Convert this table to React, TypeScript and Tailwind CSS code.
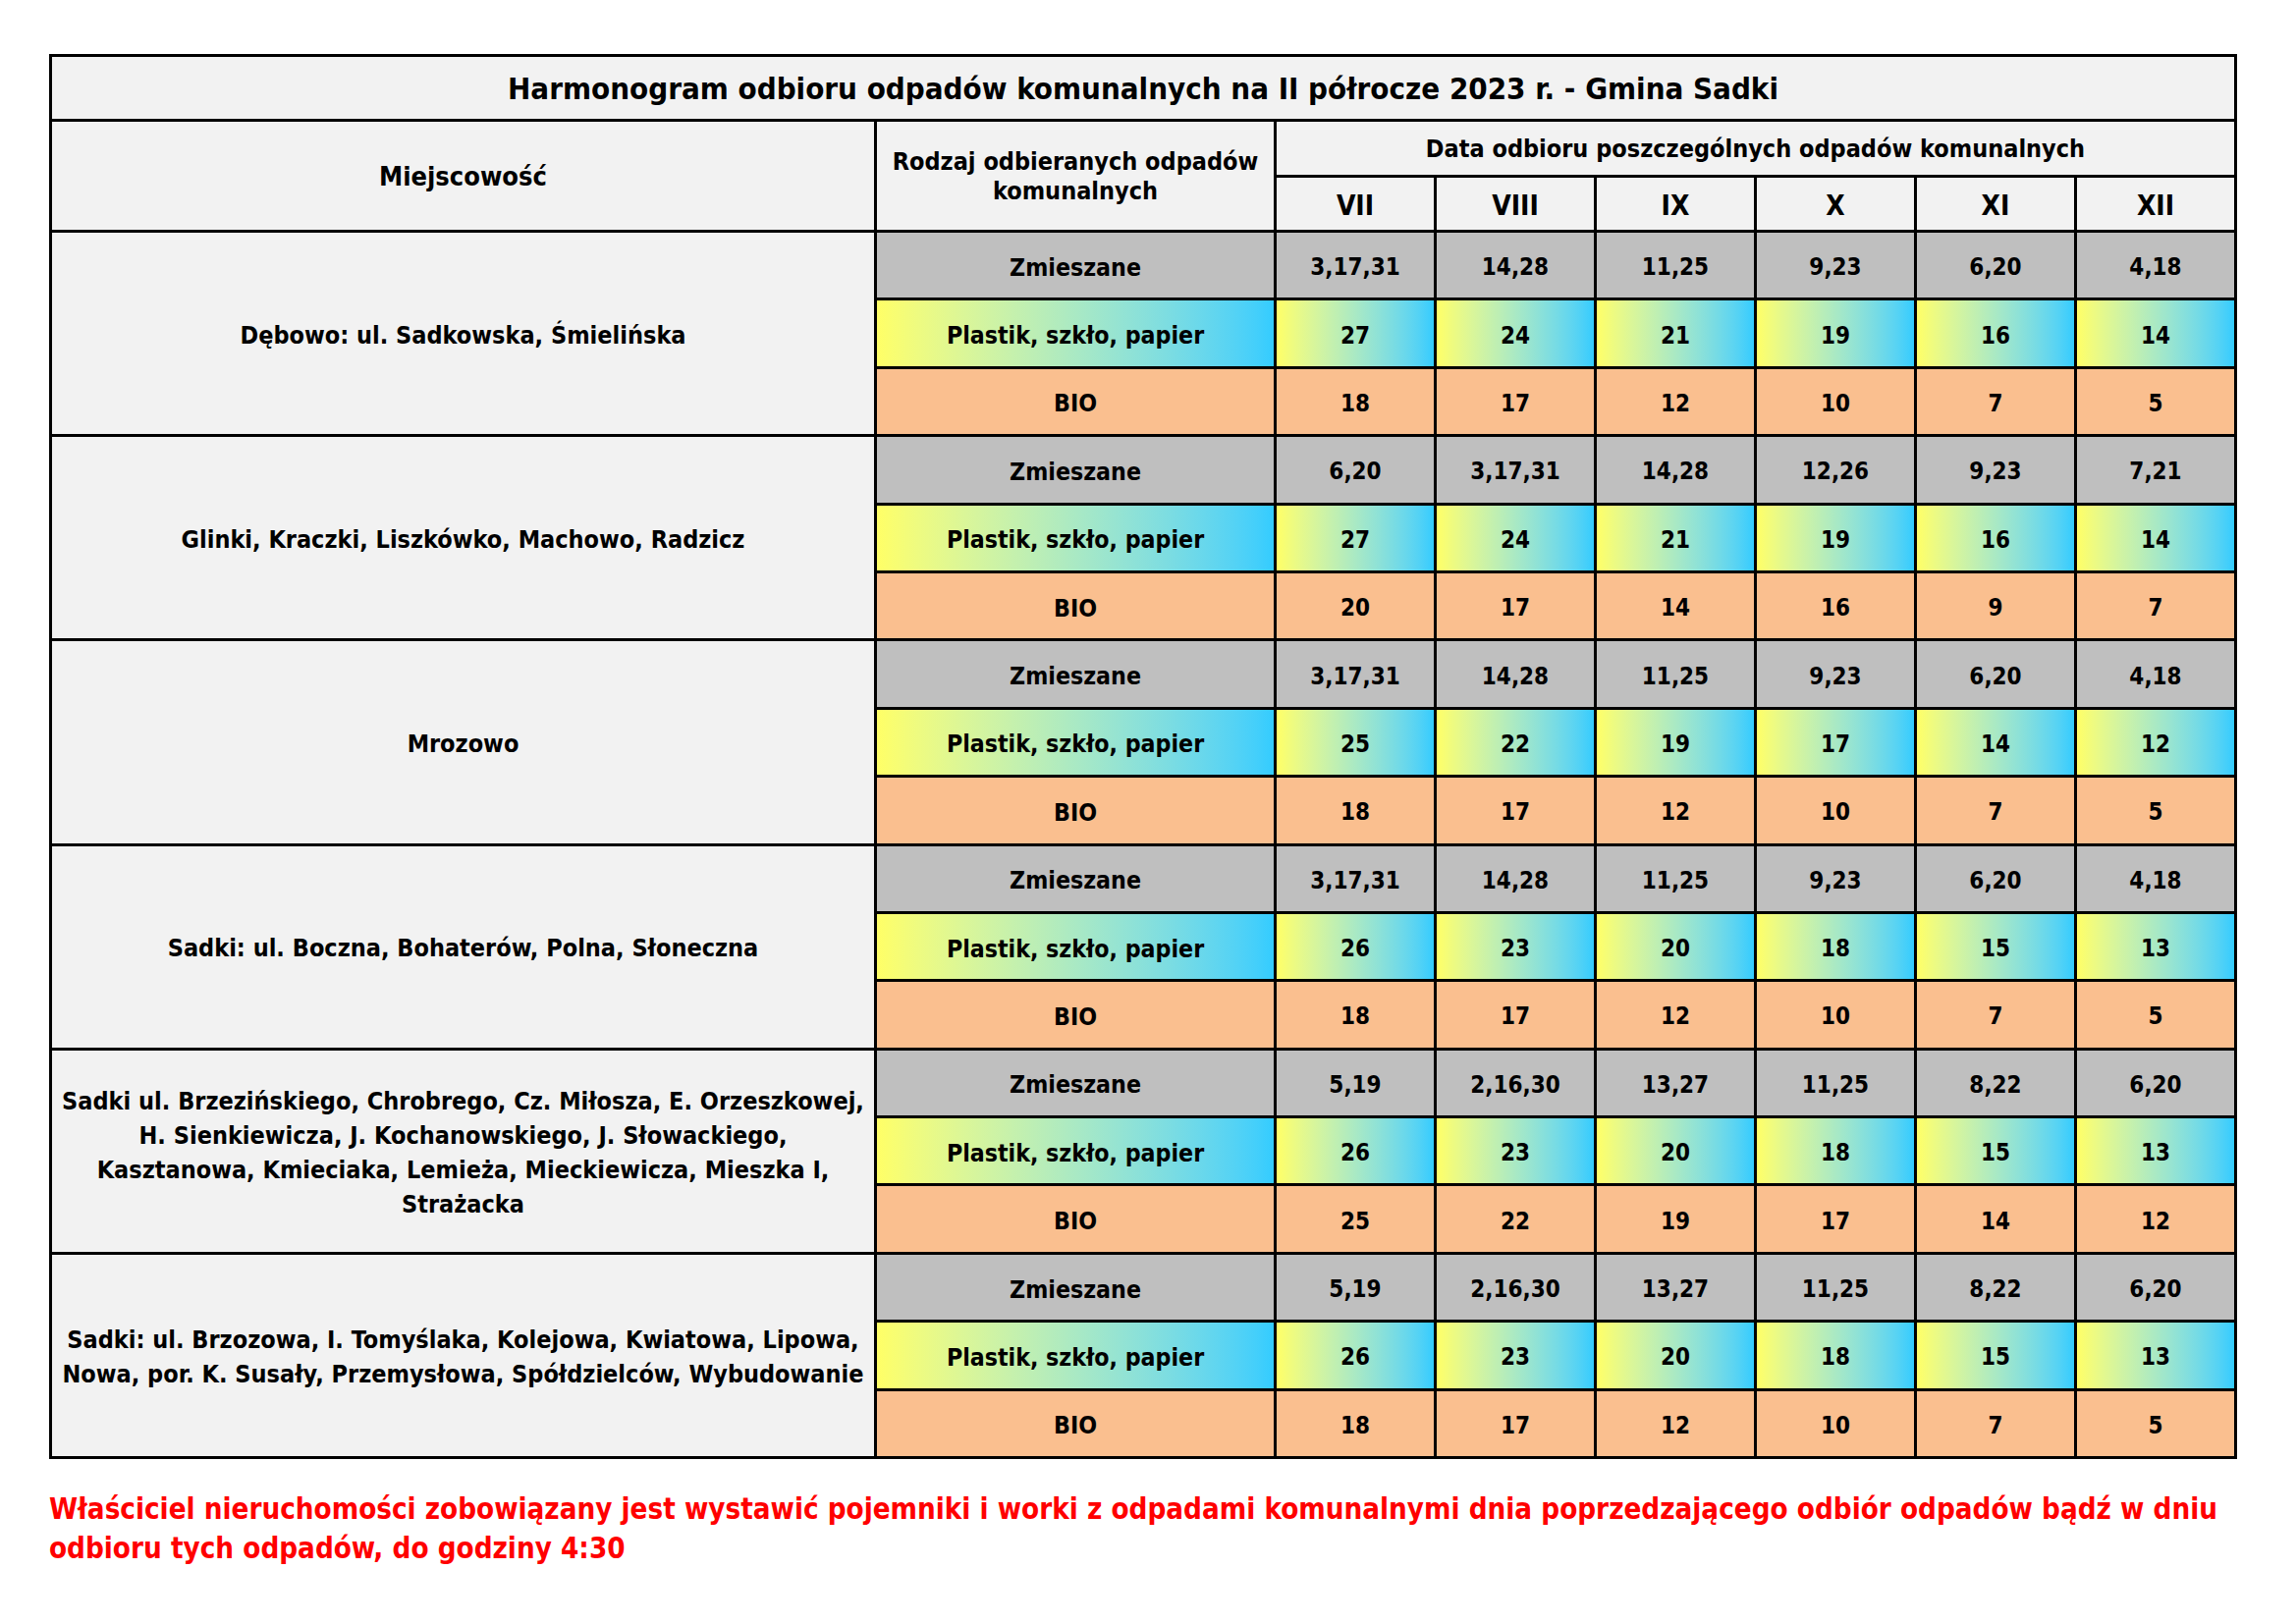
import React from "react";

type Group = {
  name: string[];
  z: string[];
  p: string[];
  b: string[];
};

const months = ["VII", "VIII", "IX", "X", "XI", "XII"];

const zA = ["3,17,31", "14,28", "11,25", "9,23", "6,20", "4,18"];
const zB = ["5,19", "2,16,30", "13,27", "11,25", "8,22", "6,20"];

const groups: Group[] = [
  {
    name: ["Dębowo: ul. Sadkowska, Śmielińska"],
    z: zA,
    p: ["27", "24", "21", "19", "16", "14"],
    b: ["18", "17", "12", "10", "7", "5"],
  },
  {
    name: ["Glinki, Kraczki, Liszkówko, Machowo, Radzicz"],
    z: ["6,20", "3,17,31", "14,28", "12,26", "9,23", "7,21"],
    p: ["27", "24", "21", "19", "16", "14"],
    b: ["20", "17", "14", "16", "9", "7"],
  },
  {
    name: ["Mrozowo"],
    z: zA,
    p: ["25", "22", "19", "17", "14", "12"],
    b: ["18", "17", "12", "10", "7", "5"],
  },
  {
    name: ["Sadki: ul. Boczna, Bohaterów, Polna, Słoneczna"],
    z: zA,
    p: ["26", "23", "20", "18", "15", "13"],
    b: ["18", "17", "12", "10", "7", "5"],
  },
  {
    name: [
      "Sadki ul. Brzezińskiego, Chrobrego, Cz. Miłosza, E. Orzeszkowej,",
      "H. Sienkiewicza, J. Kochanowskiego, J. Słowackiego,",
      "Kasztanowa, Kmieciaka, Lemieża, Mieckiewicza, Mieszka I,",
      "Strażacka",
    ],
    z: zB,
    p: ["26", "23", "20", "18", "15", "13"],
    b: ["25", "22", "19", "17", "14", "12"],
  },
  {
    name: [
      "Sadki: ul. Brzozowa, I. Tomyślaka, Kolejowa, Kwiatowa, Lipowa,",
      "Nowa, por. K. Susały, Przemysłowa, Spółdzielców, Wybudowanie",
    ],
    z: zB,
    p: ["26", "23", "20", "18", "15", "13"],
    b: ["18", "17", "12", "10", "7", "5"],
  },
];

const rowKinds = [
  { key: "z", label: "Zmieszane", cls: "bg-[#bfbfbf]" },
  {
    key: "p",
    label: "Plastik, szkło, papier",
    cls: "bg-gradient-to-r from-[#ffff66] to-[#33ccff]",
  },
  { key: "b", label: "BIO", cls: "bg-[#fabf8f]" },
] as const;

const cell = "flex items-center justify-center text-center";

export default function App() {
  return (
    <div className="w-[2338px] min-h-[1653px] bg-white pt-[55px] pl-[50px] font-['DejaVu_Sans_Condensed','DejaVu_Sans',sans-serif] font-bold text-black">
      <div className="grid w-[2228px] grid-cols-[837px_404px_repeat(6,160px)] grid-rows-[63px_54px_53px_repeat(18,66.4px)] gap-[3px] bg-black p-[3px]">
        <div className={`${cell} col-span-8 bg-[#f2f2f2] pt-[2px] text-[31px]`}>
          Harmonogram odbioru odpadów komunalnych na II półrocze 2023 r. - Gmina Sadki
        </div>
        <div className={`${cell} row-span-2 bg-[#f2f2f2] pt-[2px] text-[27px]`}>
          Miejscowość
        </div>
        <div className={`${cell} row-span-2 bg-[#f2f2f2] pt-[2px] text-[25px] leading-[30px]`}>
          Rodzaj odbieranych odpadów
          <br />
          komunalnych
        </div>
        <div className={`${cell} col-span-6 bg-[#f2f2f2] pt-[2px] text-[25px]`}>
          Data odbioru poszczególnych odpadów komunalnych
        </div>
        {months.map((m) => (
          <div key={m} className={`${cell} bg-[#f2f2f2] pt-[4px] text-[28px]`}>
            {m}
          </div>
        ))}

        {groups.map((g, gi) => (
          <React.Fragment key={gi}>
            {rowKinds.map((k, ki) => (
              <React.Fragment key={k.key}>
                {ki === 0 && (
                  <div className={`${cell} row-span-3 flex-col bg-[#f2f2f2] pt-[3px] text-[25px] leading-[35px]`}>
                    {g.name.map((line) => (
                      <span key={line} className="whitespace-nowrap">
                        {line}
                      </span>
                    ))}
                  </div>
                )}
                <div className={`${cell} ${k.cls} pt-[4px] text-[24.7px]`}>{k.label}</div>
                {g[k.key].map((v, i) => (
                  <div key={i} className={`${cell} ${k.cls} pt-[4px] text-[24px]`}>
                    {v}
                  </div>
                ))}
              </React.Fragment>
            ))}
          </React.Fragment>
        ))}
      </div>

      <p className="mt-[31px] w-[2260px] text-[29.3px] leading-[40px] text-[#ff0000]">
        Właściciel nieruchomości zobowiązany jest wystawić pojemniki i worki z odpadami komunalnymi dnia poprzedzającego odbiór odpadów bądź w dniu
        <br />
        odbioru tych odpadów, do godziny 4:30
      </p>
    </div>
  );
}
